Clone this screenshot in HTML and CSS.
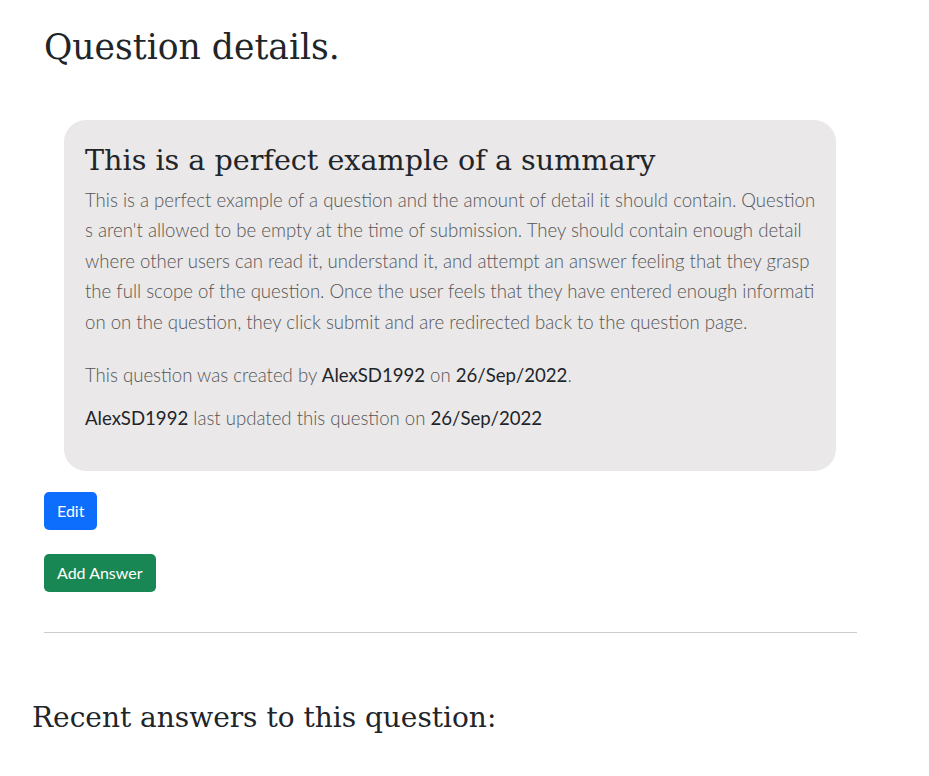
FILE: index.html
```html
<!DOCTYPE html>
<html>
<head>
<meta charset="utf-8">
<link rel="stylesheet" href="styles.css">
</head>
<body>
<main class="page">
  <section class="details">
    <h1 class="page-title">Question details.</h1>
    <article class="card">
      <h2 class="card-title">This is a perfect example of a summary</h2>
      <p class="card-text">This is a perfect example of a question and the amount of detail it should contain. Question<br>s aren't allowed to be empty at the time of submission. They should contain enough detail<br>where other users can read it, understand it, and attempt an answer feeling that they grasp<br>the full scope of the question. Once the user feels that they have entered enough informati<br>on on the question, they click submit and are redirected back to the question page.</p>
      <p class="meta">This question was created by <strong>AlexSD1992</strong> on <strong>26/Sep/2022</strong>.</p>
      <p class="meta"><strong>AlexSD1992</strong> last updated this question on <strong>26/Sep/2022</strong></p>
    </article>
    <div class="actions">
      <button class="btn btn-primary">Edit</button>
      <button class="btn btn-success">Add Answer</button>
    </div>
    <hr class="divider">
  </section>
  <h2 class="answers-title">Recent answers to this question:</h2>
</main>
</body>
</html>
```
FILE: styles.css
```css
* { box-sizing: border-box; }
body {
  margin: 0;
  background: #fff;
  color: #212529;
  font-family: "Lato", "Open Sans", sans-serif;
}
.page {
  padding: 0 0 0 32px;
}
.details {
  width: 825px;
  padding-left: 12px;
}
.page-title {
  margin: 0;
  padding-top: 24px;
  font-family: "DejaVu Serif", serif;
  font-weight: 400;
  font-size: 34.6px;
  line-height: 46px;
  color: #212529;
}
.card {
  margin: 50px 21px 0 20px;
  background: #eae8e9;
  border-radius: 22px;
  padding: 20px 21px 38px 21px;
}
.card-title {
  margin: 0 0 5px;
  font-family: "DejaVu Serif", serif;
  font-weight: 400;
  font-size: 28.6px;
  line-height: 40px;
  color: #212529;
}
.card-text {
  margin: 0 0 23px;
  font-weight: 300;
  font-size: 18.6px;
  line-height: 30.4px;
  color: #555;
  white-space: nowrap;
}
.meta {
  margin: 0 0 13px;
  font-weight: 300;
  font-size: 18.6px;
  line-height: 30px;
  color: #555;
}
.meta:last-child { margin-bottom: 0; }
.meta strong {
  font-weight: 400;
  color: #212529;
}
.actions {
  display: flex;
  flex-direction: column;
  align-items: flex-start;
  gap: 24px;
  margin-top: 21px;
}
.btn {
  font-family: "Lato", sans-serif;
  font-size: 16px;
  line-height: 24px;
  padding: 7px 13px;
  border: none;
  border-radius: 5px;
  color: #fff;
}
.btn-primary { background: #0d6efd; }
.btn-success { background: #198754; }
.divider {
  margin: 40px 0 0;
  border: 0;
  border-top: 1px solid #ccc;
  opacity: 1;
}
.answers-title {
  margin: 0;
  padding-top: 65px;
  font-family: "DejaVu Serif", serif;
  font-weight: 400;
  font-size: 28px;
  line-height: 40px;
  color: #212529;
}
```
